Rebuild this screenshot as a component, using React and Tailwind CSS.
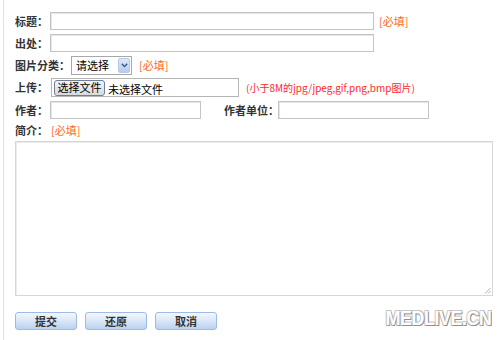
import React from "react";

const F = { fontFamily: '"Noto Sans CJK SC", "Liberation Sans", sans-serif' };

function Label({ w, children }) {
  return (
    <div className="shrink-0 whitespace-nowrap text-[11px] font-bold text-[#333] leading-none" style={{ width: w }}>
      {children}
    </div>
  );
}

function Input({ w }) {
  return (
    <div
      className="shrink-0 h-[18px] border border-[#c4c4c4] bg-white shadow-[inset_1px_1px_0_#e6e6e6]"
      style={{ width: w }}
    />
  );
}

function Req({ className = "" }) {
  return <span className={"whitespace-nowrap text-[11px] text-[#ff6a1a] leading-none " + className}>[必填]</span>;
}

function Btn({ children }) {
  return (
    <div className="w-[62px] h-[18px] rounded-[3px] border border-[#9dbbe2] bg-gradient-to-b from-[#f3f7fd] via-[#d9e6f8] to-[#b9d1f1] flex items-center justify-center text-[11px] font-bold text-[#333] leading-none">
      {children}
    </div>
  );
}

export default function App() {
  return (
    <div className="w-[500px] h-[340px] bg-white relative overflow-hidden" style={F}>
      <div className="ml-[3px] h-[340px] border-l border-[#dde9cf] pl-[11px] pt-[12px]">
        {/* 标题 */}
        <div className="flex items-center h-[18px]">
          <Label w={35}>标题：</Label>
          <Input w={324} />
          <Req className="ml-[5px]" />
        </div>
        {/* 出处 */}
        <div className="flex items-center h-[18px] mt-[4px]">
          <Label w={35}>出处：</Label>
          <Input w={324} />
        </div>
        {/* 图片分类 */}
        <div className="flex items-center h-[19px] mt-[4px]">
          <Label w={56}>图片分类：</Label>
          <div className="w-[61px] h-[19px] border border-[#a8a8a8] bg-white flex items-center justify-between">
            <span className="pl-[4px] text-[11px] text-black leading-none">请选择</span>
            <div className="w-[12px] h-[15px] mr-[1px] rounded-[2px] border border-[#b5c8e6] bg-gradient-to-b from-[#dce8f9] to-[#b5cdf0] flex items-center justify-center">
              <svg width="7" height="5" viewBox="0 0 7 5">
                <path d="M0.8 0.8 L3.5 3.6 L6.2 0.8" fill="none" stroke="#2c4f86" strokeWidth="1.3" />
              </svg>
            </div>
          </div>
          <Req className="ml-[7px]" />
        </div>
        {/* 上传 */}
        <div className="flex items-center h-[19px] mt-[3px]">
          <Label w={36}>上传：</Label>
          <div className="shrink-0 w-[188px] h-[19px] border border-[#b5b5b5] bg-white flex items-center">
            <div className="ml-[2px] w-[51px] h-[16px] rounded-[3px] border border-[#6f7f95] bg-gradient-to-b from-[#f4f4f4] to-[#dadada] flex items-center justify-center text-[11px] text-black leading-none">
              选择文件
            </div>
            <span className="ml-[3px] mt-[4px] text-[11px] text-black leading-none">未选择文件</span>
          </div>
          <span className="ml-[7px] whitespace-nowrap text-[10px] text-[#ff2a2a] leading-none">
            (小于8M的jpg/jpeg,gif,png,bmp图片)
          </span>
        </div>
        {/* 作者 */}
        <div className="flex items-center h-[18px] mt-[4px]">
          <Label w={35}>作者：</Label>
          <Input w={151} />
          <div className="ml-[23px] shrink-0">
            <Label w={54}>作者单位：</Label>
          </div>
          <Input w={151} />
        </div>
        {/* 简介 */}
        <div className="flex items-center h-[14px] mt-[4px]">
          <Label w={36}>简介：</Label>
          <Req />
        </div>
        {/* textarea */}
        <div className="relative mt-[4px] w-[478px] h-[155px] border border-[#d6d6d6] shadow-[inset_1px_1px_0_#ececec] bg-white">
          <svg className="absolute right-[1px] bottom-[1px]" width="7" height="7" viewBox="0 0 7 7">
            <path d="M6.5 1 L1 6.5 M6.5 4 L4 6.5" stroke="#9a9a9a" strokeWidth="0.8" />
          </svg>
        </div>
        {/* buttons */}
        <div className="flex gap-[8px] mt-[16px]">
          <Btn>提交</Btn>
          <Btn>还原</Btn>
          <Btn>取消</Btn>
        </div>
      </div>
      {/* watermark */}
      <div
        className="absolute right-[8px] top-[307px] text-[21px] font-bold text-white leading-none tracking-[-0.5px] scale-x-[0.85] origin-right [text-shadow:1px_1px_0_#8f8f8f,-1px_-1px_0_#c8c8c8,1px_-1px_0_#c0c0c0,-1px_1px_0_#b8b8b8]"
        style={{ fontFamily: '"Liberation Sans", sans-serif' }}
      >
        MEDLIVE.CN
      </div>
    </div>
  );
}
